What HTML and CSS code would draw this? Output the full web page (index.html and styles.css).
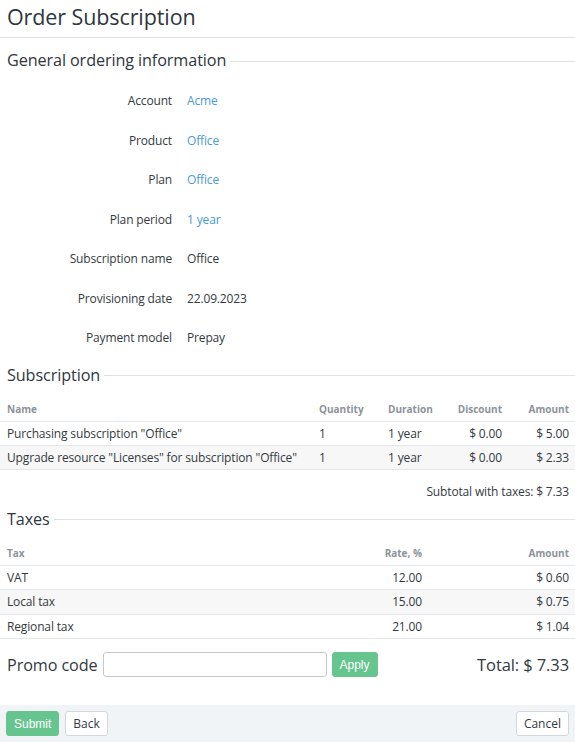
FILE: index.html
```html
<!DOCTYPE html>
<html>
<head>
<meta charset="utf-8">
<link rel="stylesheet" href="styles.css">
</head>
<body>
<div class="page">
  <h1 class="title">Order Subscription</h1>

  <div class="section-head first"><span>General ordering information</span></div>
  <div class="form">
    <div class="frow"><div class="flabel">Account</div><div class="fval link">Acme</div></div>
    <div class="frow"><div class="flabel">Product</div><div class="fval link">Office</div></div>
    <div class="frow"><div class="flabel">Plan</div><div class="fval link">Office</div></div>
    <div class="frow"><div class="flabel">Plan period</div><div class="fval link">1 year</div></div>
    <div class="frow"><div class="flabel">Subscription name</div><div class="fval">Office</div></div>
    <div class="frow"><div class="flabel">Provisioning date</div><div class="fval">22.09.2023</div></div>
    <div class="frow"><div class="flabel">Payment model</div><div class="fval">Prepay</div></div>
  </div>

  <div class="section-head"><span>Subscription</span></div>
  <table class="grid sub">
    <colgroup><col class="c-name"><col class="c-qty"><col class="c-dur"><col class="c-disc"><col class="c-amt"></colgroup>
    <thead><tr><th>Name</th><th>Quantity</th><th>Duration</th><th class="r">Discount</th><th class="r">Amount</th></tr></thead>
    <tbody>
      <tr><td>Purchasing subscription "Office"</td><td>1</td><td>1 year</td><td class="r">$ 0.00</td><td class="r">$ 5.00</td></tr>
      <tr class="alt"><td>Upgrade resource "Licenses" for subscription "Office"</td><td>1</td><td>1 year</td><td class="r">$ 0.00</td><td class="r">$ 2.33</td></tr>
    </tbody>
  </table>
  <div class="subtotal">Subtotal with taxes: $ 7.33</div>

  <div class="section-head"><span>Taxes</span></div>
  <table class="grid tax">
    <colgroup><col class="c-tax"><col class="c-rate"><col class="c-tamt"></colgroup>
    <thead><tr><th>Tax</th><th class="r">Rate, %</th><th class="r">Amount</th></tr></thead>
    <tbody>
      <tr><td>VAT</td><td class="r">12.00</td><td class="r">$ 0.60</td></tr>
      <tr class="alt"><td>Local tax</td><td class="r">15.00</td><td class="r">$ 0.75</td></tr>
      <tr><td>Regional tax</td><td class="r">21.00</td><td class="r">$ 1.04</td></tr>
    </tbody>
  </table>

  <div class="promo">
    <span class="promo-label">Promo code</span>
    <input class="promo-input" type="text">
    <button class="btn btn-green">Apply</button>
    <span class="total">Total: $ 7.33</span>
  </div>

  <div class="footer">
    <button class="btn btn-green">Submit</button>
    <button class="btn btn-white">Back</button>
    <span class="spacer"></span>
    <button class="btn btn-white">Cancel</button>
  </div>
</div>
</body>
</html>
```
FILE: styles.css
```css
html, body {
  margin: 0;
  padding: 0;
  background: #fff;
}
body {
  font-family: "Open Sans", "Liberation Sans", sans-serif;
  color: #333a42;
  font-size: 12px;
  letter-spacing: -0.15px;
}
.page {
  width: 575px;
}
.title {
  margin: 0;
  padding: 1px 7px 0;
  height: 36px;
  line-height: 32px;
  font-size: 21.5px;
  font-weight: 400;
  letter-spacing: -0.1px;
  color: #2f3640;
  border-bottom: 1px solid #dfe3e8;
}
.section-head {
  display: flex;
  align-items: center;
  height: 24px;
  padding-left: 7px;
  margin-top: 5px;
  font-size: 16.2px;
  letter-spacing: -0.1px;
  color: #2f3640;
}
.section-head.first {
  margin-top: 10px;
}
.section-head span {
  white-space: nowrap;
}
.section-head::after {
  content: "";
  flex: 1;
  height: 1px;
  margin-left: 4px;
  margin-top: 2px;
  background: #dde2e8;
}
.form {
  margin-top: 9px;
}
.frow {
  display: flex;
  height: 39.5px;
  align-items: center;
}
.flabel {
  width: 187px;
  text-align: right;
  padding-right: 15px;
  box-sizing: border-box;
}
.fval.link {
  color: #4a9ad6;
}
.grid {
  width: 575px;
  border-collapse: collapse;
  table-layout: fixed;
  margin-top: 11px;
}
.grid th, .grid td {
  padding: 0 6px 0 7px;
  text-align: left;
  white-space: nowrap;
  border-bottom: 1px solid #e3e6ea;
}
.grid th {
  height: 23px;
  font-size: 10px;
  font-weight: 700;
  letter-spacing: 0;
  color: #8d939a;
}
.grid td {
  height: 23px;
}
.grid.tax td {
  height: 23.5px;
}
.grid .r {
  text-align: right;
}
.grid tr.alt td {
  background: #f7f7f7;
}
.c-name { width: 312px; }
.c-qty { width: 69px; }
.c-dur { width: 60px; }
.c-disc { width: 67px; }
.c-amt { width: 67px; }
.c-rate { width: 150px; }
.c-tamt { width: 147px; }
.subtotal {
  text-align: right;
  padding-right: 6px;
  height: 20px;
  line-height: 20px;
  margin-top: 12px;
}
.promo {
  display: flex;
  align-items: center;
  margin-top: 13px;
  padding: 0 6px 0 7px;
  height: 25px;
}
.promo-label {
  font-size: 16.2px;
  letter-spacing: -0.1px;
  margin-right: 5px;
}
.promo-input {
  width: 224px;
  height: 25px;
  box-sizing: border-box;
  border: 1px solid #c5c9ce;
  border-radius: 3px;
  margin: 0 5px 0 0;
  padding: 0 6px;
}
.total {
  margin-left: auto;
  font-size: 16.5px;
  letter-spacing: -0.1px;
}
.btn {
  height: 25px;
  border-radius: 3px;
  padding: 0 7px;
  font-size: 12px;
  cursor: pointer;
}
.btn-green {
  background: #66c48e;
  border: 1px solid #66c48e;
  color: #fff;
  letter-spacing: 0;
  font-family: "Liberation Sans", Arial, sans-serif;
}
.btn-white {
  background: #fff;
  border: 1px solid #d3d7dc;
  color: #333a42;
  font-family: "Open Sans", sans-serif;
}
.footer {
  display: flex;
  align-items: center;
  gap: 6px;
  margin-top: 28px;
  height: 37px;
  padding: 0 6px;
  background: #f0f4f7;
}
.spacer {
  flex: 1;
}
```
